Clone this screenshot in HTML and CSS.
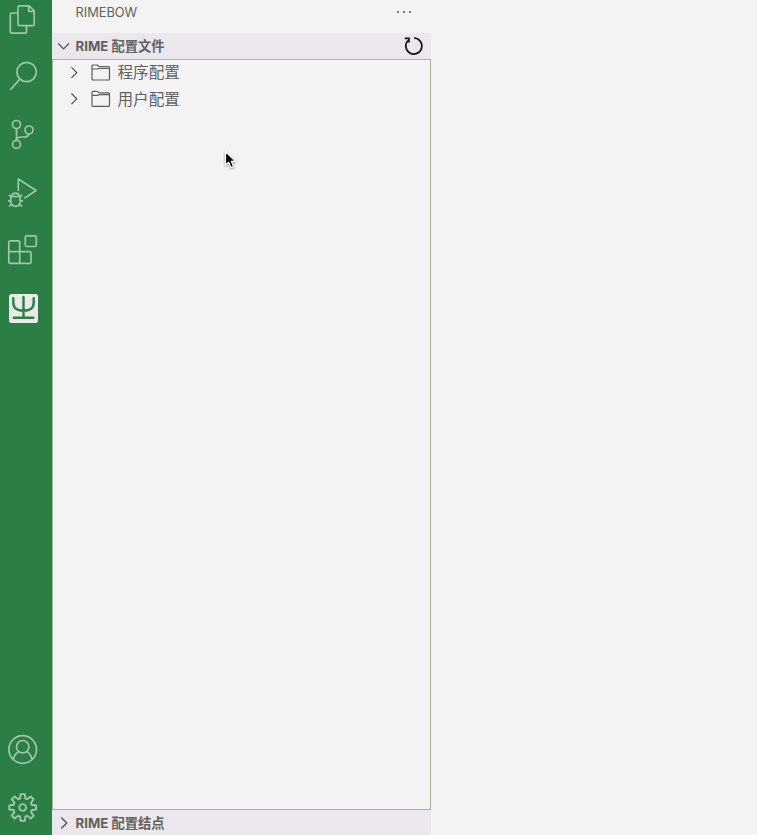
FILE: index.html
```html
<!DOCTYPE html>
<html lang="zh-CN">
<head>
<meta charset="utf-8">
<title>Rimebow</title>
<link rel="stylesheet" href="styles.css">
</head>
<body>
<div class="workbench">
  <nav class="activity-bar">
    <svg class="activity first" viewBox="0 0 52 48"><path d="M19 5.8H29.2L34.2 10.8V24.2Q34.2 25.7 32.7 25.7H19.5Q18 25.7 18 24.2V7.3Q18 5.8 19.5 5.8M28.7 6V11.3H34M18 13H11.8Q10.3 13 10.3 14.5V31.7Q10.3 33.2 11.8 33.2H25Q26.5 33.2 26.5 31.7V26"/></svg>
    <svg class="activity" viewBox="0 0 52 58"><circle cx="26.6" cy="24" r="9.7"/><path d="M19.8 31.1L10.2 42"/></svg>
    <svg class="activity" viewBox="0 0 52 58"><circle cx="16.5" cy="18.5" r="4"/><circle cx="16.5" cy="38.4" r="4"/><circle cx="29" cy="24" r="4"/><path d="M16.5 22.5V34.4M16.5 34.4Q17 31 21 31H24.5Q28 31 28.8 28"/></svg>
    <svg class="activity" viewBox="0 0 52 58"><path d="M18.3 27V15L36 26.5L24.5 34.2M10.8 32.5H20.2V36.8Q20.2 42.3 15.5 42.3Q10.8 42.3 10.8 36.8ZM12 32.2Q12 29.2 15.5 29.2Q19 29.2 19 32.2M8 36.8H10.8M20.2 36.8H23M9 30.7L11.2 33M22 30.7L19.8 33M9 42.5L11.6 40M22 42.5L19.4 40"/></svg>
    <svg class="activity" viewBox="0 0 52 58"><path d="M10.3 18.8H18.2Q19.7 18.8 19.7 20.3V29.7H29.5Q31 29.7 31 31.2V39.9Q31 41.4 29.5 41.4H10.3Q8.8 41.4 8.8 39.9V20.3Q8.8 18.8 10.3 18.8M8.8 29.7H19.7V41.4"/><rect x="25.3" y="13.8" width="11" height="10.7" rx="1.5"/></svg>
    <svg class="activity active" viewBox="0 0 52 58"><rect class="tile" x="9" y="14" width="29" height="29" rx="2.5"/><path class="rime" d="M13.3 18.2V22.5C13.3 28.5 17 30.7 23.5 30.7S33.7 28.5 33.7 22.5V18.2M23.5 17V37.7M13.8 37.7H33.3"/></svg>
    <span class="spacer"></span>
    <svg class="activity" viewBox="0 0 52 58"><circle cx="22.7" cy="29.5" r="13.8"/><circle cx="22.7" cy="26.7" r="6.2"/><path d="M13.5 39.5Q14 34.3 18.7 31.5M31.9 39.5Q31.4 34.3 26.7 31.5"/></svg>
    <svg class="activity gear" viewBox="0 0 52 58"><g transform="translate(22.7 29.5)"><path d="M-2 -13.4H2L2.7 -9L4.5 -8.3L8.1 -10.9L10.9 -8.1L8.3 -4.5L9 -2.7L13.4 -2V2L9 2.7L8.3 4.5L10.9 8.1L8.1 10.9L4.5 8.3L2.7 9L2 13.4H-2L-2.7 9L-4.5 8.3L-8.1 10.9L-10.9 8.1L-8.3 4.5L-9 2.7L-13.4 2V-2L-9 -2.7L-8.3 -4.5L-10.9 -8.1L-8.1 -10.9L-4.5 -8.3L-2.7 -9Z"/><circle r="3.4"/></g></svg>
  </nav>
  <aside class="sidebar">
    <header class="title"><span>RIMEBOW</span><span class="more"><i></i><i></i><i></i></span></header>
    <div class="section-head">
      <svg class="chevron" viewBox="0 0 16 16"><path d="M2.3 5.5L7.6 10.8L12.9 5.5"/></svg>
      <h3>RIME 配置文件</h3>
      <svg class="refresh" viewBox="0 0 22 22"><path d="M11.1 3A8 8 0 1 1 5 5.5M1.8 3.4H6V7.6"/></svg>
    </div>
    <div class="tree">
      <div class="row">
        <svg class="chevron" viewBox="0 0 16 16"><path d="M5.5 2.3L10.8 7.6L5.5 12.9"/></svg>
        <svg class="folder" viewBox="0 0 20 18"><path d="M1 15V2Q1 1 2 1H6.2L8 2.5H17.5Q18.5 2.5 18.5 3.5V15Q18.5 16 17.5 16H2Q1 16 1 15M1 5H6.5L8 4.3H18.5"/></svg>
        <span>程序配置</span>
      </div>
      <div class="row">
        <svg class="chevron" viewBox="0 0 16 16"><path d="M5.5 1.5L10.8 6.8L5.5 12.1"/></svg>
        <svg class="folder" viewBox="0 0.6 20 18"><path d="M1 15V2Q1 1 2 1H6.2L8 2.5H17.5Q18.5 2.5 18.5 3.5V15Q18.5 16 17.5 16H2Q1 16 1 15M1 5H6.5L8 4.3H18.5"/></svg>
        <span>用户配置</span>
      </div>
    </div>
    <div class="section-head bottom">
      <svg class="chevron" viewBox="0 0 16 16"><path d="M5.3 2.5L10.8 8L5.3 13.5"/></svg>
      <h3>RIME 配置结点</h3>
    </div>
  </aside>
  <main class="editor"></main>
  <svg class="pointer" viewBox="0 0 14 20"><path d="M1.5 1.5V15.2L4.6 12.3L7 17.6L9.6 16.4L7.3 11.3H11.3Z"/></svg>
</div>
</body>
</html>
```
FILE: styles.css
```css
* { box-sizing: border-box; }
body { margin: 0; background: #f3f3f3; }
.workbench {
  position: relative;
  display: flex;
  height: 835px;
  overflow: hidden;
  color: #616161;
  font-family: Inter, "Noto Sans CJK SC", sans-serif;
}
svg { display: block; flex: none; overflow: visible; fill: none; stroke-linejoin: round; }
.activity-bar {
  display: flex;
  flex-direction: column;
  width: 52px;
  height: 836px;
  background: #2c7e47;
}
.activity { width: 52px; height: 58px; stroke: #a0c6a9; stroke-width: 1.7; }
.activity.first { height: 48px; }
.activity.gear { stroke-width: 1.9; stroke-linejoin: miter; }
.tile { fill: #e8ebe8; stroke: none; }
.rime { stroke: #2c7e47; stroke-width: 2.4; stroke-linecap: round; }
.spacer { flex: 1; }
.sidebar { display: flex; flex-direction: column; width: 379px; }
.title {
  display: flex;
  justify-content: space-between;
  height: 33px;
  padding: 4px 20.5px 0 23.5px;
  font-size: 12.8px;
  line-height: 18px;
}
.more { display: flex; gap: 4px; padding-top: 6.5px; }
.more i { width: 2px; height: 2px; border-radius: 1px; background: #555; }
.section-head {
  display: flex;
  align-items: center;
  height: 26px;
  padding: 0 6px 0 4px;
  background: #ece7ed;
}
.section-head h3 {
  flex: 1;
  margin: 0 0 0 3.5px;
  font-size: 13.25px;
  line-height: 26px;
  font-weight: 700;
}
.section-head.bottom { height: 25px; }
.chevron { width: 16px; height: 16px; stroke: #4b4b4b; stroke-width: 1.2; }
.refresh { width: 22px; height: 22px; stroke: #111; stroke-width: 1.7; stroke-linejoin: miter; }
.tree { flex: 1; border: 1px solid #a6b298; }
.row { display: flex; align-items: center; height: 26.5px; padding-left: 13px; font-size: 15.6px; line-height: 26px; }
.folder { width: 20px; height: 18px; margin: 0 7px 0 8.5px; stroke: #5e5e5e; stroke-width: 1.2; }
.editor { flex: 1; }
.pointer {
  position: absolute;
  left: 224px;
  top: 150px;
  width: 14px;
  height: 20px;
  fill: #000;
  stroke: #fff;
  stroke-width: 1.2;
  filter: drop-shadow(0 1px 1px #0006);
}
```
